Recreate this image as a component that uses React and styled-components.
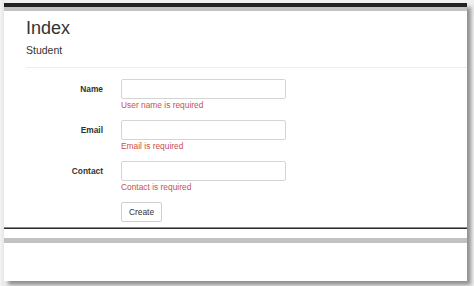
import React from 'react'
import styled, { createGlobalStyle } from 'styled-components'

const GlobalStyle = createGlobalStyle`
  html, body {
    margin: 0;
    padding: 0;
    background: #ececec;
    font-family: "Liberation Sans", Arial, sans-serif;
    color: #333;
  }
`

const Screen = styled.div`
  width: 474px;
  height: 286px;
  overflow: hidden;
  padding: 3px 0 0 4px;
  box-sizing: border-box;
  background: linear-gradient(to right, #f4f4f4, #e6e6e6 4px, #f0f0f0 4px);
`

const Window = styled.div`
  width: 463px;
  height: 278px;
  background: #fff;
  display: flex;
  flex-direction: column;
  box-shadow: 4px 4px 4px rgba(0, 0, 0, 0.4);
`

const Bar = styled.div`
  height: ${p => p.$h}px;
  background: ${p => p.$c};
  flex-shrink: 0;
`

const Main = styled.div`
  height: 216px;
  padding: 0 0 0 22px;
  box-sizing: border-box;
  overflow: hidden;
`

const Title = styled.h1`
  margin: 0;
  padding-top: 5px;
  font-size: 18px;
  font-weight: 400;
  line-height: 24px;
`

const Sub = styled.h4`
  margin: 3px 0 0;
  font-size: 10.5px;
  font-weight: 400;
  line-height: 14px;
`

const Rule = styled.hr`
  margin: 10px 0 11px;
  border: 0;
  border-top: 1px solid #eee;
`

const Form = styled.form`
  display: grid;
  grid-template-columns: 77px 165px;
  column-gap: 18px;
  align-items: start;
`

const Label = styled.label`
  font-size: 8.4px;
  font-weight: 700;
  text-align: right;
  line-height: 20px;
  color: #333;
`

const Field = styled.div`
  display: flex;
  flex-direction: column;
  margin-bottom: 9px;
`

const Actions = styled.div`
  display: flex;
`

const Input = styled.input`
  height: 20px;
  box-sizing: border-box;
  border: 1px solid #d4d4d4;
  border-radius: 2px;
  padding: 0 4px;
  font: inherit;
  font-size: 8.4px;
  outline: none;
`

const Error = styled.span`
  font-size: 8.4px;
  line-height: 12px;
  color: #cc4f4a;
`

const Button = styled.button`
  width: 41px;
  height: 20px;
  box-sizing: border-box;
  border: 1px solid #d0d0d0;
  border-radius: 2px;
  background: #fff;
  font-family: inherit;
  font-size: 8.4px;
  color: #333;
  padding: 0;
`

const fields = [
  { label: 'Name', error: 'User name is required' },
  { label: 'Email', error: 'Email is required' },
  { label: 'Contact', error: 'Contact is required' },
]

export default function App() {
  return (
    <>
      <GlobalStyle />
      <Screen>
        <Window>
          <Bar $h={4} $c="#222" />
          <Bar $h={4} $c="#c2c2c2" />
          <Main>
            <Title>Index</Title>
            <Sub>Student</Sub>
            <Rule />
            <Form>
              {fields.map(f => (
                <React.Fragment key={f.label}>
                  <Label>{f.label}</Label>
                  <Field>
                    <Input type="text" />
                    <Error>{f.error}</Error>
                  </Field>
                </React.Fragment>
              ))}
              <span />
              <Actions>
                <Button type="button">Create</Button>
              </Actions>
            </Form>
          </Main>
          <Bar $h={1} $c="#c87272" />
          <Bar $h={1} $c="#2a2a2a" />
          <Bar $h={9} $c="#fff" />
          <Bar $h={5} $c="#c2c2c2" />
        </Window>
      </Screen>
    </>
  )
}
